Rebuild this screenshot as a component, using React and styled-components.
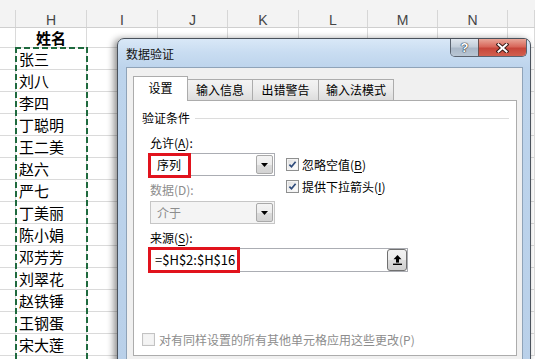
import React from 'react';
import styled, { createGlobalStyle } from 'styled-components';

const Global = createGlobalStyle`
  html, body { margin: 0; padding: 0; background: #fff; overflow: hidden; }
  body { width: 535px; height: 359px; font-family: "Noto Sans CJK SC", "Noto Sans", sans-serif; }
`;

const COLS = [
  { key: 'G', w: 16, label: '' },
  { key: 'H', w: 71, label: 'H' },
  { key: 'I', w: 71, label: 'I' },
  { key: 'J', w: 70, label: 'J' },
  { key: 'K', w: 71, label: 'K' },
  { key: 'L', w: 69, label: 'L' },
  { key: 'M', w: 70, label: 'M' },
  { key: 'N', w: 70, label: 'N' },
  { key: 'O', w: 27, label: '' },
];

const NAMES = ['张三', '刘八', '李四', '丁聪明', '王二美', '赵六', '严七', '丁美丽', '陈小娟', '邓芳芳', '刘翠花', '赵铁锤', '王钢蛋', '宋大莲'];

const Sheet = styled.div`
  position: relative;
  width: 535px;
  height: 359px;
  overflow: hidden;
  background: #fff;
`;

const HeaderRow = styled.div`
  display: flex;
  height: 28px;
  box-sizing: border-box;
  background: #f3f3f3;
  border-bottom: 1px solid #cfcfcf;
`;

const HeaderCell = styled.div`
  flex: none;
  width: ${p => p.$w}px;
  box-sizing: border-box;
  margin-top: 10px;
  padding-top: 3px;
  border-right: 1px solid #d6d6d6;
  display: flex;
  align-items: center;
  justify-content: center;
  font: 14px/1 "Liberation Sans", Arial, sans-serif;
  color: #454545;
`;

const Row = styled.div`
  display: flex;
  height: ${p => p.$h}px;
  box-sizing: border-box;
  border-bottom: 1px solid #dadada;
`;

const Cell = styled.div`
  flex: none;
  width: ${p => p.$w}px;
  box-sizing: border-box;
  border-right: 1px solid #dadada;
  display: flex;
  align-items: center;
  justify-content: ${p => (p.$center ? 'center' : 'flex-start')};
  padding-left: ${p => (p.$center ? 0 : 3)}px;
  font: ${p => (p.$bold ? 700 : 400)} 15px/1 "Noto Sans CJK SC", sans-serif;
  color: #000;
  white-space: nowrap;
`;

const Marquee = styled.div`
  position: absolute;
  left: 15px;
  top: 47px;
  width: 73px;
  height: 330px;
  pointer-events: none;
  background:
    repeating-linear-gradient(90deg, #1f6a3e 0 6px, transparent 6px 9px) left top / 100% 2px no-repeat,
    repeating-linear-gradient(180deg, #1f6a3e 0 6px, transparent 6px 9px) left top / 2px 100% no-repeat,
    repeating-linear-gradient(180deg, #1f6a3e 0 6px, transparent 6px 9px) right top / 2px 100% no-repeat;
`;

/* ---------- dialog ---------- */

const Dialog = styled.div`
  position: absolute;
  left: 117px;
  top: 38px;
  width: 414px;
  height: 340px;
  box-sizing: border-box;
  border: 1px solid #4a525c;
  border-radius: 7px 7px 0 0;
  background: linear-gradient(180deg, #d9e8f7 0px, #c8dcf1 14px, #bdd4ec 29px, #b9d0e9 100%);
  box-shadow: -3px 1px 7px rgba(0, 0, 0, 0.45);
  display: flex;
  flex-direction: column;
`;

const TitleBar = styled.div`
  flex: none;
  height: 28px;
  display: flex;
  align-items: flex-start;
  padding: 0 3px 0 8px;
`;

const Title = styled.div`
  flex: 1;
  align-self: center;
  margin-top: 1px;
  font: 12px/16px "Noto Sans CJK SC", sans-serif;
  color: #111;
`;

const Caption = styled.div`
  display: flex;
  height: 18px;
  box-sizing: border-box;
  border: 1px solid #5a6370;
  border-top: none;
  border-radius: 0 0 5px 5px;
  overflow: hidden;
`;

const CapBtn = styled.div`
  width: ${p => p.$w}px;
  display: flex;
  align-items: center;
  justify-content: center;
  background: ${p => (p.$close
    ? 'linear-gradient(180deg, #e9a698 0%, #d8675a 45%, #c7463a 55%, #d2604f 100%)'
    : 'linear-gradient(180deg, #dfe6ee 0%, #c3ceda 45%, #aab8c8 55%, #b9c6d4 100%)')};
  border-left: ${p => (p.$close ? '1px solid #6a5050' : 'none')};
  font: 700 13px/1 "Liberation Sans", Arial, sans-serif;
  color: #fff;
  text-shadow: 0 0 1px #1e2a36, 0 0 1px #1e2a36, 0 0 1px #1e2a36;
`;

const Client = styled.div`
  flex: 1;
  margin: 0 7px 0 8px;
  box-sizing: border-box;
  border: 1px solid #8fa3b8;
  background: #f0f0f0;
  padding: 8px 5px 0 6px;
  display: flex;
  flex-direction: column;
`;

const Tabs = styled.div`
  position: relative;
  z-index: 2;
  display: flex;
  align-items: flex-end;
  height: 25px;
  margin-bottom: -1px;
`;

const Tab = styled.div`
  flex: none;
  width: ${p => p.$w}px;
  height: ${p => (p.$active ? 25 : 21)}px;
  margin-bottom: ${p => (p.$active ? 0 : 1)}px;
  margin-left: ${p => (p.$first ? 0 : -1)}px;
  box-sizing: border-box;
  border: 1px solid #acacac;
  border-bottom: none;
  background: ${p => (p.$active ? '#fff' : 'linear-gradient(180deg, #f3f3f3 0%, #ebebeb 50%, #dddddd 100%)')};
  display: flex;
  align-items: center;
  justify-content: center;
  padding-bottom: ${p => (p.$active ? 2 : 0)}px;
  font: 12px/16px "Noto Sans CJK SC", sans-serif;
  color: #000;
  position: relative;
  z-index: ${p => (p.$active ? 2 : 1)};
`;

const Panel = styled.div`
  position: relative;
  height: 256px;
  box-sizing: border-box;
  border: 1px solid #acacac;
  background: #fff;
  display: flex;
  flex-direction: column;
`;

const GroupHead = styled.div`
  display: flex;
  align-items: center;
  height: 16px;
  margin-top: 9px;
  padding: 0 7px 0 8px;
  font: 12px/16px "Noto Sans CJK SC", sans-serif;
  color: #000;
`;

const GroupLine = styled.div`
  flex: 1;
  height: 1px;
  margin-left: 5px;
  background: #dcdcdc;
`;

const Body = styled.div`
  display: flex;
  flex-direction: column;
  padding-left: 16px;
`;

const TopArea = styled.div`
  display: flex;
  gap: 11px;
  margin-top: 9px;
`;

const LeftCol = styled.div`
  width: 125px;
  display: flex;
  flex-direction: column;
`;

const RightCol = styled.div`
  display: flex;
  flex-direction: column;
  gap: 7px;
  padding-top: 22px;
`;

const Label = styled.div`
  height: 16px;
  margin-top: ${p => p.$mt || 0}px;
  font: 12px/16px "Noto Sans CJK SC", sans-serif;
  color: ${p => (p.$disabled ? '#8d8d8d' : '#000')};
  white-space: nowrap;
  u { text-decoration-thickness: 1px; text-underline-offset: 2px; }
`;

const Combo = styled.div`
  position: relative;
  display: flex;
  align-items: stretch;
  height: 23px;
  margin-top: ${p => p.$mt || 0}px;
  box-sizing: border-box;
  border: 1px solid ${p => (p.$disabled ? '#c6c6c6' : '#abadb3')};
  background: ${p => (p.$disabled ? '#f4f4f4' : '#fff')};
`;

const ComboText = styled.div`
  flex: 1;
  display: flex;
  align-items: center;
  padding-left: 6px;
  font: 12px/16px "Noto Sans CJK SC", sans-serif;
  color: ${p => (p.$disabled ? '#8d8d8d' : '#000')};
`;

const DropBtn = styled.div`
  width: 17px;
  margin: 1px;
  box-sizing: border-box;
  border: 1px solid #a9a9a9;
  border-radius: 2px;
  background: linear-gradient(180deg, #f4f4f4 0%, #ececec 50%, #dcdcdc 51%, #d3d3d3 100%);
  display: flex;
  align-items: center;
  justify-content: center;
`;

const RedBox = styled.div`
  position: absolute;
  left: ${p => p.$l}px;
  top: ${p => p.$t}px;
  width: ${p => p.$w}px;
  height: ${p => p.$h}px;
  box-sizing: border-box;
  border: 3px solid #e1131d;
  pointer-events: none;
`;

const CheckRow = styled.div`
  display: flex;
  align-items: center;
  gap: ${p => p.$gap || 3}px;
  height: 15px;
  font: 12px/16px "Noto Sans CJK SC", sans-serif;
  color: ${p => (p.$disabled ? '#8d8d8d' : '#000')};
  white-space: nowrap;
  u { text-decoration-thickness: 1px; text-underline-offset: 2px; }
`;

const Box = styled.div`
  flex: none;
  width: 13px;
  height: 13px;
  box-sizing: border-box;
  border: 1px solid ${p => (p.$disabled ? '#c3c3c3' : '#8e8f8f')};
  background: ${p => (p.$disabled ? '#f4f4f4' : 'linear-gradient(135deg, #dcdcdc 0%, #f4f4f4 60%, #ffffff 100%)')};
  box-shadow: inset 0 0 0 1px ${p => (p.$disabled ? '#f0f0f0' : '#f4f4f4')};
  display: flex;
  align-items: center;
  justify-content: center;
`;

const SourceInput = styled.div`
  position: relative;
  display: flex;
  align-items: center;
  width: 258px;
  height: 24px;
  margin-top: 2px;
  box-sizing: border-box;
  border: 1px solid #abadb3;
  background: #fff;
`;

const SourceText = styled.div`
  flex: 1;
  padding-left: 4px;
  font: 13px/16px "Noto Sans CJK SC", sans-serif;
  color: #000;
`;

const RefBtn = styled.div`
  width: 20px;
  height: 22px;
  box-sizing: border-box;
  border: 1px solid #707070;
  border-radius: 3px;
  background: linear-gradient(180deg, #f2f2f2 0%, #ebebeb 50%, #dddddd 51%, #cfcfcf 100%);
  display: flex;
  align-items: center;
  justify-content: center;
`;

const Bottom = styled.div`
  margin-top: auto;
  margin-bottom: 8px;
  padding-left: 8px;
`;

const DropArrow = () => (
  <svg width="7" height="4" viewBox="0 0 7 4"><polygon points="0,0 7,0 3.5,4" fill="#000" /></svg>
);

const Check = () => (
  <svg width="11" height="11" viewBox="0 0 11 11">
    <path d="M2.4 5.6 L4.5 7.8 L8.6 2.8" fill="none" stroke="#2d4a7a" strokeWidth="1.7" />
  </svg>
);

const UpIcon = () => (
  <svg width="9" height="10" viewBox="0 0 9 10">
    <polygon points="4.5,0 0.5,4.2 8.5,4.2" fill="#000" />
    <rect x="3" y="4" width="3" height="3.6" fill="#000" />
    <rect x="0" y="8.6" width="9" height="1.4" fill="#000" />
  </svg>
);

const CloseIcon = () => (
  <svg width="13" height="10" viewBox="0 0 13 10">
    <path d="M2.5 1.5 L10.5 8.5 M10.5 1.5 L2.5 8.5" stroke="#3a1c18" strokeWidth="4" strokeLinecap="square" />
    <path d="M2.5 1.5 L10.5 8.5 M10.5 1.5 L2.5 8.5" stroke="#fff" strokeWidth="2" strokeLinecap="square" />
  </svg>
);

export default function App() {
  return (
    <>
      <Global />
      <Sheet>
        <HeaderRow>
          {COLS.map(c => (
            <HeaderCell key={c.key} $w={c.w}>{c.label}</HeaderCell>
          ))}
        </HeaderRow>
        <Row $h={20}>
          {COLS.map(c => (
            <Cell key={c.key} $w={c.w} $center $bold>{c.key === 'H' ? '姓名' : ''}</Cell>
          ))}
        </Row>
        {NAMES.map(n => (
          <Row key={n} $h={22}>
            {COLS.map(c => (
              <Cell key={c.key} $w={c.w}>{c.key === 'H' ? n : ''}</Cell>
            ))}
          </Row>
        ))}
        <Marquee />

        <Dialog>
          <TitleBar>
            <Title>数据验证</Title>
            <Caption>
              <CapBtn $w={27}>?</CapBtn>
              <CapBtn $w={47} $close><CloseIcon /></CapBtn>
            </Caption>
          </TitleBar>
          <Client>
            <Tabs>
              <Tab $w={55} $active $first>设置</Tab>
              <Tab $w={66}>输入信息</Tab>
              <Tab $w={67}>出错警告</Tab>
              <Tab $w={76}>输入法模式</Tab>
            </Tabs>
            <Panel>
              <GroupHead>验证条件<GroupLine /></GroupHead>
              <Body>
                <TopArea>
                  <LeftCol>
                    <Label>允许(<u>A</u>):</Label>
                    <Combo $mt={2}>
                      <ComboText>序列</ComboText>
                      <DropBtn><DropArrow /></DropBtn>
                      <RedBox $l={-3} $t={-1} $w={43} $h={25} />
                    </Combo>
                    <Label $mt={6} $disabled>数据(D):</Label>
                    <Combo $mt={3} $disabled>
                      <ComboText $disabled>介于</ComboText>
                      <DropBtn><DropArrow /></DropBtn>
                    </Combo>
                  </LeftCol>
                  <RightCol>
                    <CheckRow><Box><Check /></Box><span>忽略空值(<u>B</u>)</span></CheckRow>
                    <CheckRow><Box><Check /></Box><span>提供下拉箭头(<u>I</u>)</span></CheckRow>
                  </RightCol>
                </TopArea>
                <Label $mt={6}>来源(<u>S</u>):</Label>
                <SourceInput>
                  <SourceText>=$H$2:$H$16</SourceText>
                  <RefBtn><UpIcon /></RefBtn>
                  <RedBox $l={-3} $t={-2} $w={92} $h={26} />
                </SourceInput>
              </Body>
              <Bottom>
                <CheckRow $disabled $gap={4}><Box $disabled /><span>对有同样设置的所有其他单元格应用这些更改(P)</span></CheckRow>
              </Bottom>
            </Panel>
          </Client>
        </Dialog>
      </Sheet>
    </>
  );
}
